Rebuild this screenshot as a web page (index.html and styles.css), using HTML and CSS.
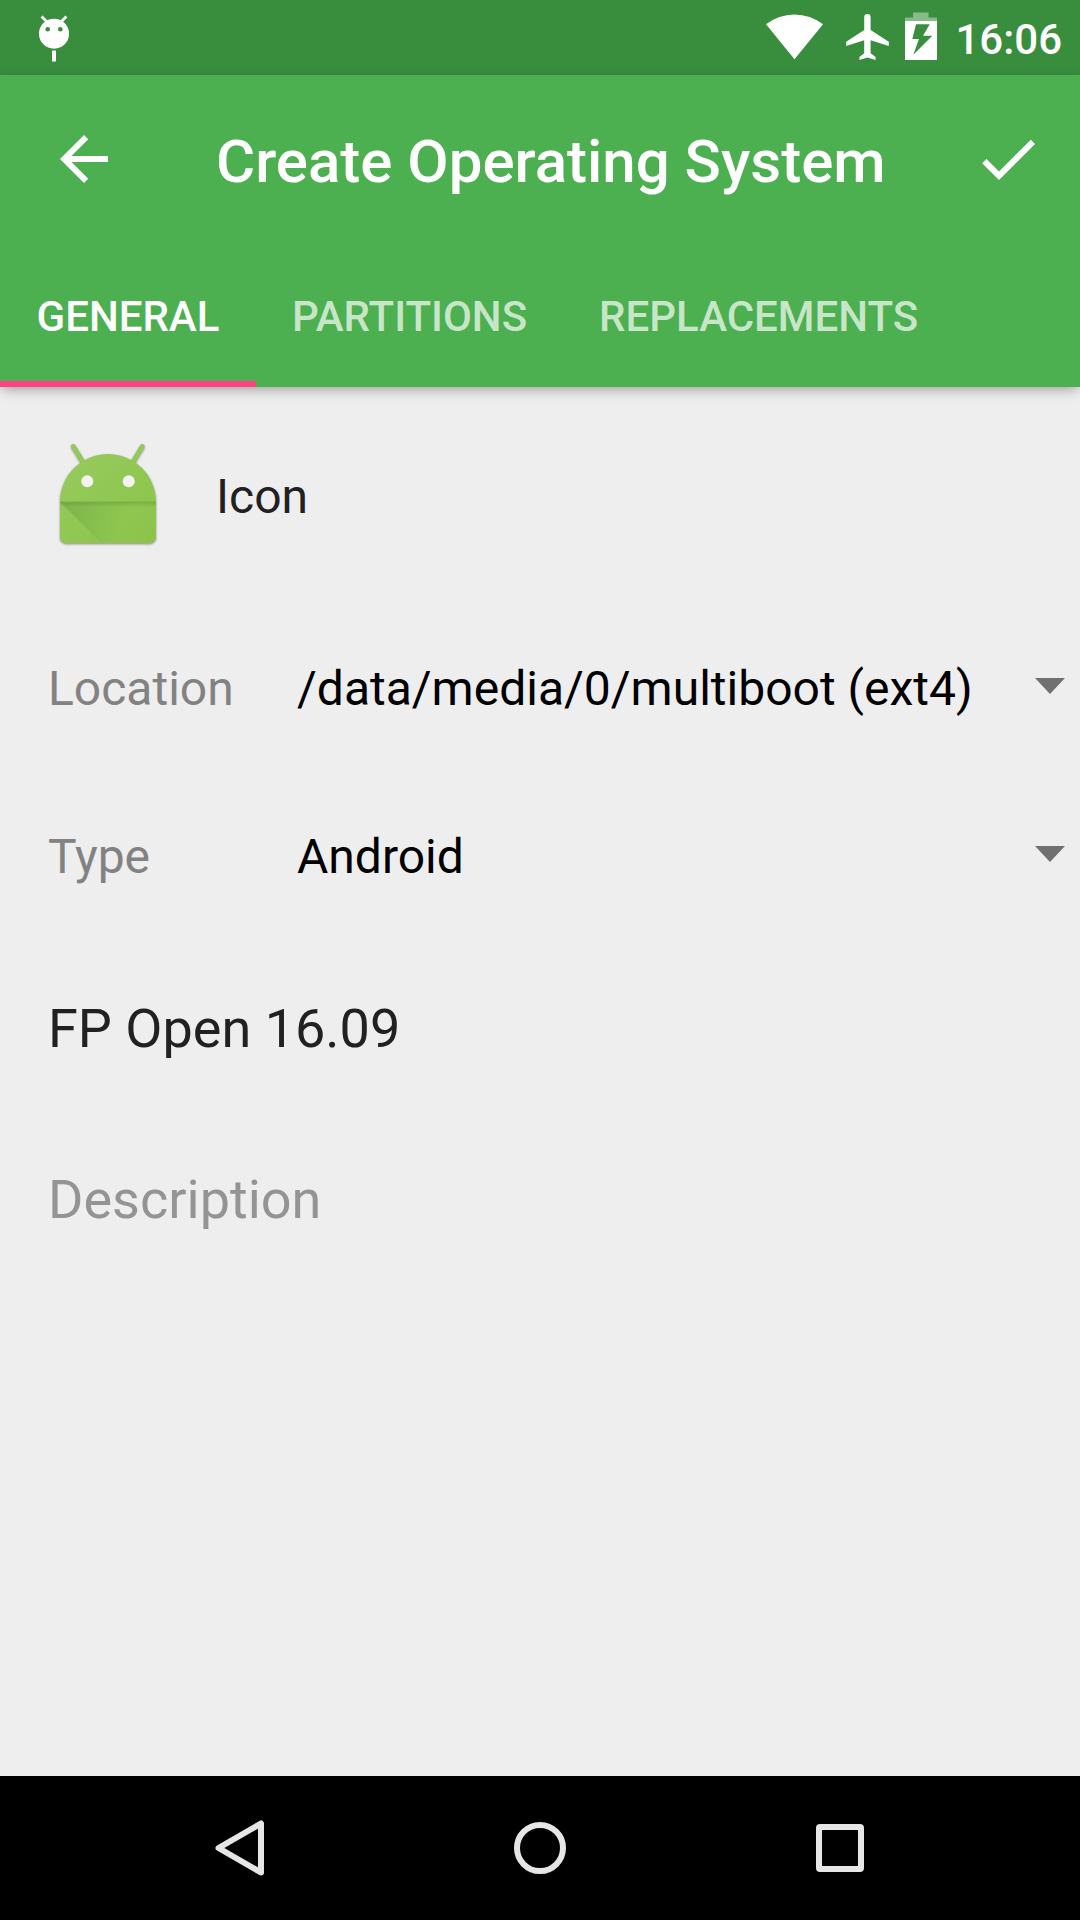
FILE: index.html
```html
<!DOCTYPE html>
<html lang="en">
<head>
  <meta charset="utf-8">
  <meta name="viewport" content="width=device-width, initial-scale=1">
  <title>Create Operating System</title>
  <link rel="stylesheet" href="styles.css">
</head>
<body>
  <div class="screen">
    <div class="status-bar">
      <svg class="status-debug" viewBox="0 0 30 75" fill="#fff" aria-hidden="true">
        <path d="M2.6 16.6l6 6M27.4 16.6l-6 6" stroke="#fff" stroke-width="2.8"/>
        <circle cx="15" cy="33.7" r="15"/>
        <path d="M13 50.5h4v11h-4z"/>
        <g fill="#388e3c"><circle cx="8.7" cy="29.3" r="2.3"/><circle cx="21.3" cy="29.3" r="2.3"/></g>
      </svg>
      <div class="status-icons">
        <svg class="status-wifi" viewBox="0 0 60 75" fill="#fff" aria-hidden="true">
          <path d="M29.5 59.3L1 24.3a46 46 0 0 1 57 0z"/>
        </svg>
        <svg class="status-plane" viewBox="0 0 48 75" fill="#fff" aria-hidden="true">
          <path d="M23.2 17.3a3.2 3.2 0 0 1 6.4 0V30L47.8 41.7V46L29.6 40.3V53.2L34.6 57v3L26.4 57.500 18.400 60v-3l4.800-3.800V40.300L5.200 46v-4.300L23.200 30z"/>
        </svg>
        <svg class="status-battery" viewBox="0 0 32 75" fill="#fff" aria-hidden="true">
          <path d="M8 12.500h15.500v5H32V21H0v-3.500h8z" opacity=".4"/>
          <path fill-rule="evenodd" d="M0 21h32v39H0zM11 24.300L7.300 39H14L8.300 54.700 27.300 35.700H18L24.700 24.300z"/>
        </svg>
        <time class="status-time">16:06</time>
      </div>
    </div>

    <header class="app-bar">
      <div class="toolbar">
        <button class="icon-button" type="button" aria-label="Back">
          <svg viewBox="0 0 24 24" fill="#fff"><path d="M20 11H7.830l5.590-5.590L12 4l-8 8 8 8 1.410-1.410L7.830 13H20v-2z"/></svg>
        </button>
        <h1 class="title">Create Operating System</h1>
        <button class="icon-button" type="button" aria-label="Done">
          <svg viewBox="0 0 24 24" fill="#fff"><path d="M9 16.170L4.830 12l-1.420 1.410L9 19 21 7l-1.410-1.410z"/></svg>
        </button>
      </div>
      <div class="tabs" role="tablist">
        <button class="tab tab-active" type="button" role="tab" aria-selected="true">GENERAL</button>
        <button class="tab" type="button" role="tab" aria-selected="false">PARTITIONS</button>
        <button class="tab" type="button" role="tab" aria-selected="false">REPLACEMENTS</button>
      </div>
    </header>

    <main class="form">
      <button class="icon-row" type="button">
        <svg class="launcher" viewBox="0 0 144 144" aria-hidden="true">
          <defs>
            <linearGradient id="fold" gradientUnits="userSpaceOnUse" x1="30" y1="84" x2="84" y2="104">
              <stop offset="0" stop-color="#33691e" stop-opacity=".2"/>
              <stop offset="1" stop-color="#33691e" stop-opacity="0"/>
            </linearGradient>
            <linearGradient id="crease" x1="0" y1="0" x2="0" y2="1">
              <stop offset="0" stop-color="#33691e" stop-opacity=".22"/>
              <stop offset="1" stop-color="#33691e" stop-opacity="0"/>
            </linearGradient>
            <linearGradient id="skin" x1="0" y1="0" x2="1" y2="1">
              <stop offset="0" stop-color="#98ca5f"/>
              <stop offset=".5" stop-color="#90c853"/>
              <stop offset="1" stop-color="#8bc34a"/>
            </linearGradient>
          </defs>
          <g class="launcher-body">
            <path d="M37.400 22.400L47 38M106.300 22.400L97 38" stroke="#92c958" stroke-width="4.800" stroke-linecap="round"/>
            <path d="M24 78a48 48 0 0 1 96 0v35.300a6 6 0 0 1-6 6H30a6 6 0 0 1-6-6z" fill="url(#skin)"/>
          </g>
          <path d="M24 78h96v5H24z" fill="url(#crease)"/>
          <path d="M24 78h76L84 119.300H65.300z" fill="url(#fold)"/>
          <path d="M24 78h96" stroke="#7cb043" stroke-width="1"/>
          <g fill="#f3f3f3"><circle cx="51.300" cy="57.200" r="6"/><circle cx="92.700" cy="57.200" r="6"/></g>
        </svg>
        <span>Icon</span>
      </button>

      <div class="field">
        <label class="field-label" for="location">Location</label>
        <div class="spinner">
          <select id="location"><option>/data/media/0/multiboot (ext4)</option></select>
          <svg class="caret" viewBox="0 0 30 16" aria-hidden="true"><path d="M0 0h30L15 16z" fill="#707070"/></svg>
        </div>
      </div>
      <div class="field">
        <label class="field-label" for="type">Type</label>
        <div class="spinner">
          <select id="type"><option>Android</option></select>
          <svg class="caret" viewBox="0 0 30 16" aria-hidden="true"><path d="M0 0h30L15 16z" fill="#707070"/></svg>
        </div>
      </div>

      <div class="text-fields">
        <input class="text-input" type="text" aria-label="Name" value="FP Open 16.09">
        <input class="text-input" type="text" aria-label="Description" placeholder="Description">
      </div>
    </main>

    <nav class="nav-bar">
      <button class="nav-button" type="button" aria-label="Back">
        <svg viewBox="0 0 72 72"><path d="M57 11.500v49L14.500 36z"/></svg>
      </button>
      <button class="nav-button" type="button" aria-label="Home">
        <svg viewBox="0 0 72 72"><circle cx="36" cy="36" r="23"/></svg>
      </button>
      <button class="nav-button" type="button" aria-label="Overview">
        <svg viewBox="0 0 72 72"><rect x="15" y="15" width="42" height="42" rx="1"/></svg>
      </button>
    </nav>
  </div>
</body>
</html>
```
FILE: styles.css
```css
* {
  box-sizing: border-box;
}

body {
  margin: 0;
  background: #eee;
  color: #212121;
  font-family: Roboto, "Liberation Sans", sans-serif;
  font-size: 48px;
}

button,
input,
select {
  margin: 0;
  padding: 0;
  border: 0;
  border-radius: 0;
  outline: 0;
  background: none;
  color: inherit;
  font: inherit;
}

svg {
  display: block;
}

.screen {
  display: flex;
  flex-direction: column;
  min-height: 100vh;
}

/* Status bar */
.status-bar {
  display: flex;
  align-items: center;
  justify-content: space-between;
  height: 75px;
  padding: 0 18px 0 39px;
  background: #388e3c;
  color: #fff;
}

.status-icons {
  display: flex;
  align-items: center;
  gap: 16px;
}

.status-debug,
.status-wifi,
.status-plane,
.status-battery {
  height: 75px;
}

.status-debug {
  width: 30px;
}

.status-wifi {
  width: 60px;
}

.status-plane {
  width: 48px;
}

.status-battery {
  width: 32px;
}

.status-time {
  padding: 4px 0 0 2px;
  font-size: 42px;
  font-weight: 500;
  line-height: 48px;
}

/* App bar */
.app-bar {
  position: relative;
  background: #4caf50;
  box-shadow: 0 4px 12px -2px rgba(0, 0, 0, 0.36);
  color: #fff;
}

.toolbar {
  display: flex;
  align-items: center;
  height: 168px;
  padding: 0 36px 0 48px;
}

.icon-button {
  flex: none;
  width: 72px;
  height: 72px;
}

.title {
  flex: 1;
  margin: 0;
  padding: 6px 0 0 96px;
  font-size: 60px;
  font-weight: 500;
  line-height: 72px;
}

.tabs {
  display: flex;
}

.tab {
  min-width: 256px;
  height: 144px;
  padding: 10px 36px 0;
  border-bottom: 6px solid transparent;
  color: rgba(255, 255, 255, 0.7);
  font-size: 42px;
  font-weight: 500;
  line-height: 48px;
}

.tab-active {
  border-bottom-color: #ff4081;
  color: #fff;
}

/* Form */
.form {
  flex: 1;
  display: flex;
  flex-direction: column;
  padding-top: 37px;
}

.icon-row {
  display: flex;
  align-items: center;
  gap: 36px;
  padding: 0 36px 36px;
  text-align: left;
}

.launcher {
  width: 144px;
  height: 144px;
}

.launcher-body {
  filter: drop-shadow(0 1px 1px rgba(0, 0, 0, 0.4));
}

.field {
  display: grid;
  grid-template-columns: 249px 1fr;
  align-items: center;
  height: 168px;
  padding-left: 48px;
}

.field-label {
  color: #828282;
}

.spinner {
  position: relative;
}

.spinner select {
  width: 100%;
  height: 72px;
  appearance: none;
  color: #000;
}

.caret {
  position: absolute;
  top: 26px;
  right: 15px;
  width: 30px;
  height: 16px;
  pointer-events: none;
}

.text-fields {
  display: flex;
  flex-direction: column;
  padding: 3px 48px 0;
}

.text-input {
  width: 100%;
  height: 171px;
  font-size: 54px;
}

.text-input::placeholder {
  color: #949494;
  opacity: 1;
}

/* Navigation bar */
.nav-bar {
  display: flex;
  height: 144px;
  padding: 0 90px;
  background: #000;
}

.nav-button {
  flex: 1;
  display: flex;
  align-items: center;
  justify-content: center;
}

.nav-button svg {
  width: 72px;
  height: 72px;
  fill: none;
  stroke: #e6e6e6;
  stroke-width: 6;
  stroke-linejoin: round;
}
```
